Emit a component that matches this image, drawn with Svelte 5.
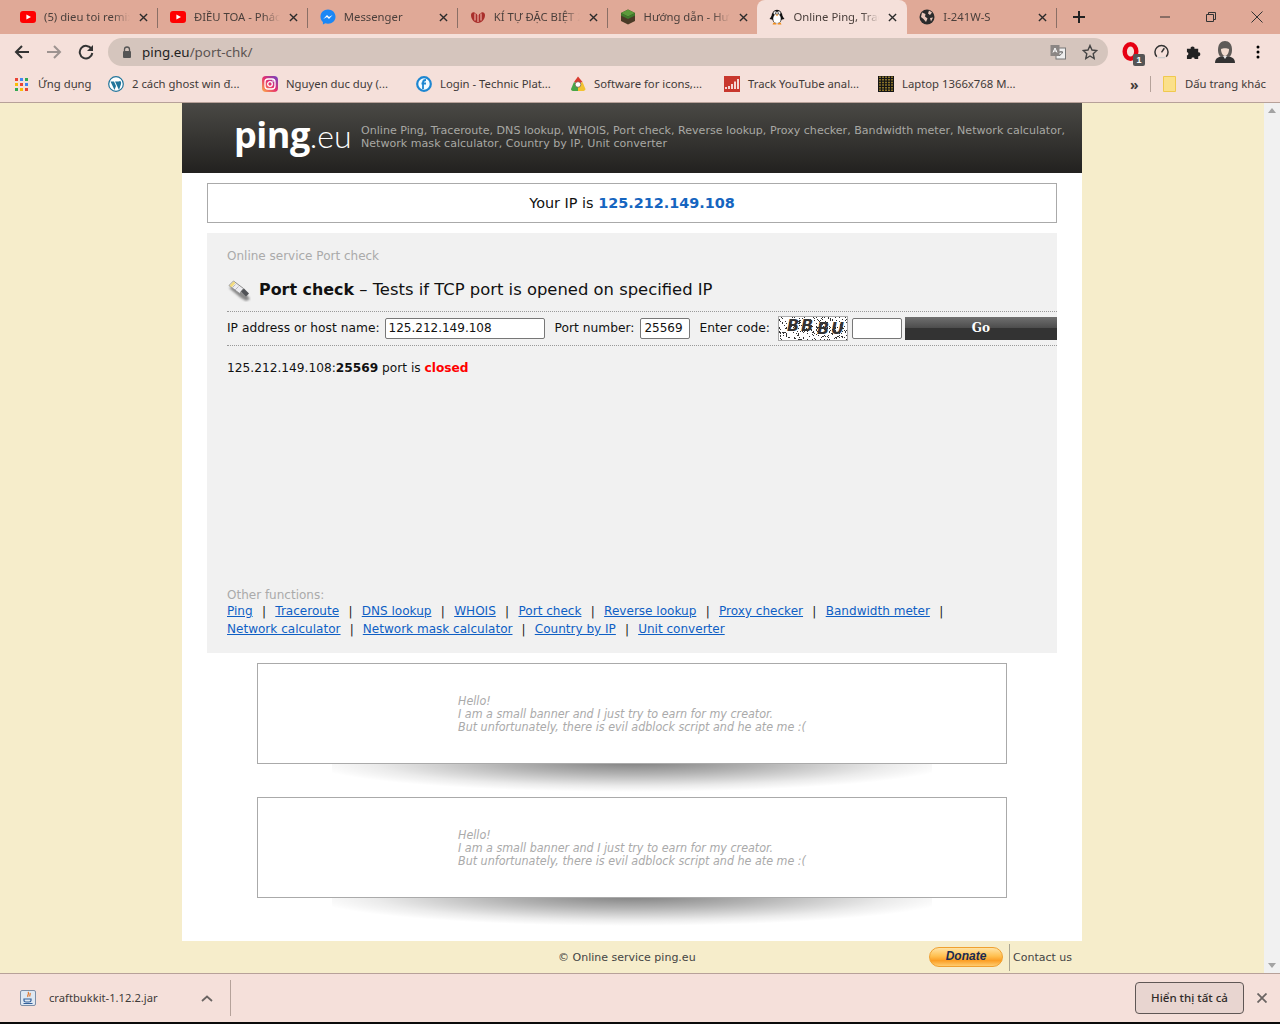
<script>
  const tabs = [
    { title: '(5) dieu toi remix', icon: 'yt' },
    { title: 'ĐIỀU TOA - Phác đồ', icon: 'yt' },
    { title: 'Messenger', icon: 'ms' },
    { title: 'KÍ TỰ ĐẶC BIỆT 2', icon: 'ki' },
    { title: 'Hướng dẫn - Hướng', icon: 'mc' },
    { title: 'Online Ping, Traceroute', icon: 'pg', active: true },
    { title: 'I-241W-S', icon: 'gl' }
  ];
  const marks = [
    { title: 'Ứng dụng', icon: 'apps', w: 93 },
    { title: '2 cách ghost win đ...', icon: 'wp', w: 154 },
    { title: 'Nguyen duc duy (...', icon: 'ig', w: 154 },
    { title: 'Login - Technic Plat...', icon: 'tp', w: 154 },
    { title: 'Software for icons,...', icon: 'sw', w: 154 },
    { title: 'Track YouTube anal...', icon: 'tr', w: 154 },
    { title: 'Laptop 1366x768 M...', icon: 'lp', w: 154 }
  ];
  const links1 = ['Ping', 'Traceroute', 'DNS lookup', 'WHOIS', 'Port check', 'Reverse lookup', 'Proxy checker', 'Bandwidth meter'];
  const links2 = ['Network calculator', 'Network mask calculator', 'Country by IP', 'Unit converter'];
  const appColors = ['#ea4335', '#4285f4', '#34a853', '#fbbc05', '#ea4335', '#4285f4', '#34a853', '#fbbc05', '#ea4335'];
  let seed = 77;
  const rnd = () => ((seed = (seed * 16807) % 2147483647) / 2147483647);
  const dots = Array.from({ length: 260 }, () => ({ x: Math.floor(rnd() * 68), y: Math.floor(rnd() * 23) }));
</script>

{#snippet ico(k)}
  {#if k === 'yt'}
    <svg viewBox="0 0 16 16" class="i16"><rect y="2" width="16" height="12" rx="3" fill="#f00"/><path d="M6.400 5.400v5.200L11 8z" fill="#fff"/></svg>
  {:else if k === 'ms'}
    <svg viewBox="0 0 16 16" class="i16"><path d="M8 .5C3.700.5.500 3.600.500 7.700c0 2.200.9 4 2.400 5.300v2.600l2.400-1.300c.8.2 1.700.4 2.700.4 4.300 0 7.500-3 7.500-7S12.300.5 8 .5z" fill="#1b87f5"/><path d="M3.300 10 7 6.100l2 2 3.600-2L9 10 7 8z" fill="#fff"/></svg>
  {:else if k === 'ki'}
    <svg viewBox="0 0 16 16" class="i16"><path d="M1 6c0-2 2-3.500 3.500-2.500L8 6l3.500-2.500C13 2.500 15 4 15 6c0 4-3 8-7 8S1 10 1 6z" fill="#a92f2b"/><path d="M5 4.500v7M8 5v8M11 4.500v7" stroke="#f0b8ac" stroke-width="1.100"/></svg>
  {:else if k === 'mc'}
    <svg viewBox="0 0 16 16" class="i16"><path d="M8 .5 15 4v8l-7 3.500L1 12V4z" fill="#4b3a26"/><path d="M8 .5 15 4 8 7.500 1 4z" fill="#5c9a3a"/><path d="M1 4l7 3.500V10L1 6.500zM15 4 8 7.500V10l7-3.500z" fill="#3f7a2b"/></svg>
  {:else if k === 'pg'}
    <svg viewBox="0 0 16 16" class="i16"><path d="M3.500 15.500h4l-1-2h-2zM8.500 15.500h4l-1-2h-2z" fill="#f08c1a"/><ellipse cx="8" cy="7.500" rx="5.500" ry="6.800" fill="#111"/><ellipse cx="8" cy="9.700" rx="3.800" ry="4.300" fill="#fff"/><circle cx="6.200" cy="4" r="1.700" fill="#fff"/><circle cx="9.800" cy="4" r="1.700" fill="#fff"/><circle cx="6.500" cy="4.100" r=".7"/><circle cx="9.500" cy="4.100" r=".7"/><path d="M6.500 5.600h3L8 7.200z" fill="#f08c1a"/><path d="M3 6.500.5 10l2.500.5M13 6.500l2.500 3.500-2.500.5" fill="#111"/></svg>
  {:else if k === 'gl'}
    <svg viewBox="0 0 16 16" class="i16"><circle cx="8" cy="8" r="7.500" fill="#2b2b2b"/><path d="M3 3.500 6.500 5 6 7.500 8.500 9.500 7 13 4.500 10 2 8zM10 1.500l3 2-2 2.500-2-1.500zM11 9l3-.5-2 4z" fill="#e8c6ba"/></svg>
  {:else if k === 'apps'}
    <span class="apps">{#each appColors as c}<i style:background={c}></i>{/each}</span>
  {:else if k === 'wp'}
    <svg viewBox="0 0 16 16" class="i16"><circle cx="8" cy="8" r="7.300" fill="#fff" stroke="#21759b" stroke-width="1.200"/><path d="M2.500 5.500 6.500 14 8 10 6 5.500zM7 5.500 11 14 13 8c.4-1.300 0-2.500-.8-3L10.500 5.500z" fill="#21759b"/></svg>
  {:else if k === 'ig'}
    <svg viewBox="0 0 16 16" class="i16"><defs><linearGradient id="igg" x1="0" y1="1" x2="1" y2="0"><stop offset="0" stop-color="#fdb14a"/><stop offset=".5" stop-color="#e5306f"/><stop offset="1" stop-color="#6a45c8"/></linearGradient></defs><rect width="16" height="16" rx="4" fill="url(#igg)"/><rect x="3" y="3" width="10" height="10" rx="3" fill="none" stroke="#fff" stroke-width="1.300"/><circle cx="8" cy="8" r="2.300" fill="none" stroke="#fff" stroke-width="1.300"/><circle cx="11" cy="5" r=".8" fill="#fff"/></svg>
  {:else if k === 'tp'}
    <svg viewBox="0 0 16 16" class="i16"><circle cx="8" cy="8" r="6.800" fill="#f4fbff" stroke="#1c86d1" stroke-width="2.200"/><path d="M7 13V6.500c0-1.500 1-2.500 3-2.500M5.500 7.500H10" fill="none" stroke="#1c86d1" stroke-width="1.800"/></svg>
  {:else if k === 'sw'}
    <svg viewBox="0 0 16 16" class="i16"><path d="M8 .5 12.500 6 8 8 4 6z" fill="#d93a2e"/><path d="M4 6 1 13c0 1.500 1 2 3 2h4V9z" fill="#47a648"/><path d="M12.500 6 15.500 13c0 1.500-1.500 2-3 2H8V9z" fill="#f2c230"/><circle cx="8" cy="8.500" r="2.800" fill="#fff" stroke="#6a5a45" stroke-width=".7"/></svg>
  {:else if k === 'tr'}
    <svg viewBox="0 0 16 16" class="i16"><rect width="16" height="16" fill="#c8372d"/><path d="M2 13v-2M5 13V10M8 13V8M11 13V5.500M14 13V3" stroke="#fff" stroke-width="1.600"/></svg>
  {:else if k === 'lp'}
    <svg viewBox="0 0 16 16" class="i16"><rect width="16" height="16" fill="#151515"/><path d="M2 .5v15M5 .5v15M8 .5v15M11 .5v15M14 .5v15" stroke="#c9a534" stroke-width="1.300" stroke-dasharray="1.500 1.100"/></svg>
  {/if}
{/snippet}

{#snippet banner()}
  <div class="banner">
    <p>Hello!<br>I am a small banner and I just try to earn for my creator.<br>But unfortunately, there is evil adblock script and he ate me :(</p>
  </div>
  <div class="shade"></div>
{/snippet}

<div class="screen">
  <header class="chrome">
    <div class="tabstrip">
      {#each tabs as t, n}
        <div class="tab" class:active={t.active} class:sep={!t.active && !tabs[n + 1]?.active}>
          <span class="tabicon">{@render ico(t.icon)}</span>
          <span class="tabtitle">{t.title}</span>
          <svg class="tabx" viewBox="0 0 10 10"><path d="M1 1l8 8M9 1l-8 8" stroke="#2a2a2a" stroke-width="1.500"/></svg>
        </div>
      {/each}
      <svg class="plus" viewBox="0 0 12 12"><path d="M6 0v12M0 6h12" stroke="#222" stroke-width="2"/></svg>
      <div class="winctl">
        <svg viewBox="0 0 12 12"><path d="M1 6h10" stroke="#333"/></svg>
        <svg viewBox="0 0 12 12"><path d="M1.500 3.500h7v7h-7zM3.500 3.500v-2h7v7h-2" fill="none" stroke="#333"/></svg>
        <svg viewBox="0 0 12 12"><path d="M.5.500l11 11M11.500.500l-11 11" stroke="#333"/></svg>
      </div>
    </div>

    <div class="toolbar">
      <svg class="nav" viewBox="0 0 16 16"><path d="M15 8H2M8 2 2 8l6 6" fill="none" stroke="#333" stroke-width="2"/></svg>
      <svg class="nav" viewBox="0 0 16 16"><path d="M1 8h13M8 2l6 6-6 6" fill="none" stroke="#9d9390" stroke-width="2"/></svg>
      <svg class="nav" viewBox="0 0 16 16"><path d="M13.500 5A6.300 6.300 0 1 0 14.300 9" fill="none" stroke="#333" stroke-width="2"/><path d="M15 1v6H9z" fill="#333"/></svg>
      <div class="omni">
        <svg class="lock" viewBox="0 0 10 12"><path d="M2.500 5V3.500a2.500 2.500 0 0 1 5 0V5" fill="none" stroke="#555" stroke-width="1.300"/><rect x="1" y="5" width="8" height="7" rx="1" fill="#555"/></svg>
        <span class="url"><b>ping.eu</b>/port-chk/</span>
        <svg class="trans" viewBox="0 0 16 16"><rect x="6" y="4" width="9.500" height="11" fill="#eee" stroke="#777"/><rect x=".5" y="1" width="9" height="11" fill="#8b8684"/><path d="M3 8.500 5 4l2 4.500M3.700 7h2.600" fill="none" stroke="#fff"/><path d="M9 8h4M11 7v1M12.500 8c-.5 2-2 3-3.500 3.500" fill="none" stroke="#666"/></svg>
        <svg class="star" viewBox="0 0 16 16"><path d="M8 1.500 10 6l4.800.5-3.600 3.200 1 4.800L8 12l-4.200 2.500 1-4.800L1.200 6.500 6 6z" fill="none" stroke="#444" stroke-width="1.400"/></svg>
      </div>
      <div class="exts">
        <span class="opera"><svg viewBox="0 0 16 18" class="op"><ellipse cx="8" cy="9" rx="5.500" ry="6.800" fill="none" stroke="#e60012" stroke-width="4.200"/></svg><em>1</em></span>
        <svg class="gauge" viewBox="0 0 16 16"><path d="M3 13.500a7 7 0 1 1 10 0" fill="none" stroke="#333" stroke-width="1.600"/><path d="M8 9l3-4.500" stroke="#333" stroke-width="1.600"/><path d="M4 14.500h8" stroke="#ccc" stroke-width="1.500"/></svg>
        <svg class="puzzle" viewBox="0 0 16 16"><path d="M1 5h4c-1-3 5-3 4 0h4v4c3-1 3 5 0 4v3H9c1-2-4-2-3 0H1v-4c2 1 2-4 0-3z" fill="#222"/></svg>
        <svg class="avatar" viewBox="0 0 22 22"><path d="M1 22c0-5 4-7 10-7s10 2 10 7z" fill="#333"/><path d="M4 9c0-6 3-9 7-9s7 3 7 9c0 3-1 6-3 7H7c-2-1-3-4-3-7z" fill="#5f5b58"/><path d="M7 8c2-1 6-1 8 0 0 4-2 7-4 7S7 12 7 8z" fill="#f2dccf"/><path d="M9 15h4l-2 3z" fill="#e5e5e5"/></svg>
        <svg class="dots" viewBox="0 0 4 14"><circle cx="2" cy="2" r="1.500"/><circle cx="2" cy="7" r="1.500"/><circle cx="2" cy="12" r="1.500"/></svg>
      </div>
    </div>

    <div class="bookmarks">
      {#each marks as m}
        <div class="mark" style:width="{m.w}px">{@render ico(m.icon)}<span class="up1">{m.title}</span></div>
      {/each}
      <div class="bm-right">
        <span class="more">»</span>
        <span class="bmsep"></span>
        <svg class="folder" viewBox="0 0 13 16"><path d="M.5.500h12v15H.5z" fill="#fbe08a" stroke="#f0c94e"/></svg>
        <span class="up1">Dấu trang khác</span>
      </div>
    </div>
  </header>

  <div class="viewport">
    <main class="page">
      <div class="wrap">
        <div class="head">
          <div class="logo"><span class="lg-a">ping</span><span class="lg-b">.eu</span></div>
          <div class="tag">Online Ping, Traceroute, DNS lookup, WHOIS, Port check, Reverse lookup, Proxy checker, Bandwidth meter, Network calculator,<br>Network mask calculator, Country by IP, Unit converter</div>
        </div>
        <div class="content">
          <div class="ipbox">Your IP is <b>125.212.149.108</b></div>
          <section class="panel">
            <div class="crumb">Online service Port check</div>
            <h1>
              <svg class="plug" viewBox="0 0 24 22">
                <defs><filter id="bl" x="-30%" y="-30%" width="160%" height="160%"><feGaussianBlur stdDeviation="1.300"/></filter></defs>
                <path d="M2 8 14 18l5 3 4-2-4-5L6 6z" fill="#888" filter="url(#bl)"/>
                <path d="M2 5.500 6.500 1 16.500 8.500 12.500 13.500z" fill="#ececf0" stroke="#8f8f8f"/>
                <path d="M2.500 5.500 6.500 1.500 8.500 3 4.500 7.500z" fill="#f2dc80"/>
                <path d="M5 8l3.500-3.500M8 10l3.500-3.500" stroke="#b9b9c0"/>
                <path d="M14 11.500 17 8.500 22 13.500 19 16.500z" fill="#505256"/>
              </svg>
              <span><b>Port check</b> – Tests if TCP port is opened on specified IP</span>
            </h1>
            <form class="frm" onsubmit={(e) => e.preventDefault()}>
              <label for="ip">IP address or host name:</label>
              <input id="ip" class="w-ip" value="125.212.149.108" />
              <label for="port" class="l2">Port number:</label>
              <input id="port" class="w-port" value="25569" />
              <label for="code" class="l3">Enter code:</label>
              <div class="captcha">
                <svg viewBox="0 0 68 23" aria-hidden="true">
                  {#each dots as d}<rect x={d.x} y={d.y} width="1" height="1" fill="#333"/>{/each}
                </svg>
                <span class="c1">BB</span><span class="c2">BU</span>
              </div>
              <input id="code" class="w-code" />
              <button type="submit">Go</button>
            </form>
            <div class="result">125.212.149.108:<b>25569</b> port is <b class="red">closed</b></div>
            <div class="other-f">Other functions:</div>
            <div class="links row1">
              {#each links1 as l}<a href="#top">{l}</a><span class="bar">|</span>{/each}
            </div>
            <div class="links row2">
              {#each links2 as l, n}<a href="#top">{l}</a>{#if n < links2.length - 1}<span class="bar">|</span>{/if}{/each}
            </div>
          </section>
          <div class="ads">
            {@render banner()}
            {@render banner()}
          </div>
        </div>
        <footer class="foot">
          <span class="copy">© Online service ping.eu</span>
          <span class="donate">Donate</span>
          <span class="fsep"></span>
          <span class="contact">Contact us</span>
        </footer>
      </div>
    </main>
    <aside class="scroll">
      <svg viewBox="0 0 8 5"><path d="M4 0 8 5H0z" fill="#a3a3a3"/></svg>
      <svg viewBox="0 0 8 5"><path d="M4 5 8 0H0z" fill="#a3a3a3"/></svg>
    </aside>
  </div>

  <div class="dl">
    <svg class="jar" viewBox="0 0 16 16"><rect x=".5" y=".5" width="15" height="15" rx="1.500" fill="#dfe8f2" stroke="#7c8ea6"/><path d="M8 2c2 2-1.500 3 0 5M10 3c1 1.500-1 2 0 3.500" fill="none" stroke="#e2762b" stroke-width="1.200"/><path d="M4 9h7v1.500c0 1-1 1.500-2 1.500H6c-1 0-2-.5-2-1.500zM3.500 13.500h9" fill="none" stroke="#33609a" stroke-width="1.200"/></svg>
    <span class="fname up1">craftbukkit-1.12.2.jar</span>
    <svg class="chev" viewBox="0 0 12 7"><path d="M1 6l5-4.500L11 6" fill="none" stroke="#6b6563" stroke-width="1.800"/></svg>
    <span class="dlsep"></span>
    <button class="showall" type="button">Hiển thị tất cả</button>
    <svg class="dlx" viewBox="0 0 10 10"><path d="M.5.500l9 9M9.500.500l-9 9" stroke="#6a6462" stroke-width="1.800"/></svg>
  </div>
  <div class="taskbar"></div>
</div>

<style>
  :global(body) { margin: 0; background: #f6edcb; }
  .screen { width: 1280px; height: 1024px; display: flex; flex-direction: column; overflow: hidden; font-family: "Noto Sans", sans-serif; }
  .chrome { background: #f5e0da; border-bottom: 1px solid #b7a199; height: 103px; box-sizing: border-box; flex: none; }
  .up1 { margin-top: -2px; }

  .tabstrip { height: 34px; background: #e0a997; display: flex; align-items: center; padding-left: 8px; position: relative; }
  .tab { width: 149.900px; height: 34px; box-sizing: border-box; padding: 0 9px 0 12px; display: flex; align-items: center; position: relative; flex: none; }
  .tab.sep::after { content: ""; position: absolute; right: 0; top: 8px; height: 20px; width: 1px; background: #8a6f66; }
  .tab.active { background: #f5e0da; border-radius: 8px 8px 0 0; }
  .tabicon { width: 16px; height: 16px; display: flex; align-items: center; justify-content: center; flex: none; }
  .i16 { width: 16px; height: 16px; flex: none; display: block; }
  .tabtitle { margin: -2px 0 0 8px; width: 86px; overflow: hidden; white-space: nowrap; font-size: 11.300px; color: #4a3f3b; -webkit-mask-image: linear-gradient(90deg, #000 80%, transparent); mask-image: linear-gradient(90deg, #000 80%, transparent); }
  .tabx { width: 9px; height: 9px; margin-left: 9px; flex: none; }
  .plus { width: 12px; height: 12px; margin-left: 16px; flex: none; }
  .winctl { margin-left: auto; display: flex; gap: 34px; padding-right: 17px; }
  .winctl svg { width: 12px; height: 12px; display: block; }

  .toolbar { height: 35px; display: flex; align-items: center; padding-left: 14px; }
  .nav { width: 16px; height: 16px; margin-right: 16px; flex: none; }
  .omni { width: 1000px; margin-left: -2px; height: 28px; background: #d5c5bd; border-radius: 14px; display: flex; align-items: center; padding-left: 14px; box-sizing: border-box; flex: none; }
  .lock { width: 10px; height: 12px; flex: none; }
  .url { margin-left: 10px; font-size: 13.400px; color: #5c5452; }
  .url b { font-weight: 400; color: #222; }
  .trans { width: 16px; height: 16px; margin-left: auto; }
  .star { width: 16px; height: 16px; margin: 0 10px 0 16px; }
  .exts { display: flex; align-items: center; flex: 1; padding-left: 14px; }
  .opera { position: relative; width: 20px; height: 20px; display: block; }
  .op { width: 17px; height: 19px; display: block; }
  .opera em { position: absolute; right: -3px; bottom: -4px; width: 12px; height: 12px; background: #555; color: #fff; border-radius: 2px; font: 700 9px/12px "Liberation Sans", sans-serif; text-align: center; }
  .gauge { width: 15px; height: 15px; margin-left: 12px; }
  .puzzle { width: 15px; height: 15px; margin-left: 17px; }
  .avatar { width: 22px; height: 22px; margin-left: 13px; }
  .dots { width: 4px; height: 14px; margin-left: 20px; }

  .bookmarks { height: 33px; padding-bottom: 3px; box-sizing: border-box; display: flex; align-items: center; padding-left: 15px; font-size: 11.300px; color: #3f3a38; }
  .mark { display: flex; align-items: center; gap: 8px; flex: none; white-space: nowrap; }
  .apps { width: 13px; height: 13px; display: grid; grid-template-columns: repeat(3, 3px); gap: 2px; margin-right: 2px; }
  .apps i { display: block; width: 3px; height: 3px; }
  .bm-right { margin-left: auto; display: flex; align-items: center; padding-right: 14px; }
  .more { font-size: 14px; font-weight: 700; width: 14px; }
  .bmsep { width: 1px; height: 16px; background: #b5a29a; margin: 0 12px 0 6px; }
  .folder { width: 13px; height: 16px; margin-right: 9px; }

  .viewport { height: 870px; display: flex; flex: none; background: #f6edcb; }
  .page { width: 1264px; height: 870px; overflow: hidden; flex: none; }
  .wrap { width: 900px; margin-left: 182px; font-family: "DejaVu Sans", Verdana, sans-serif; color: #111; }
  .scroll { width: 16px; background: #f1f1f1; display: flex; flex-direction: column; justify-content: space-between; align-items: center; padding: 5px 0 5px; box-sizing: border-box; }
  .scroll svg { width: 8px; height: 5px; display: block; }

  .head { height: 70px; background: linear-gradient(#4a4945, #22211f); display: flex; align-items: center; padding: 0 0 2px 52px; box-sizing: border-box; }
  .logo { display: flex; align-items: baseline; color: #fff; width: 127px; flex: none; white-space: nowrap; margin-top: -5px; }
  .lg-a { font: 700 36px/1 "Open Sans", sans-serif; letter-spacing: -.5px; }
  .lg-b { font: 300 32px/1 Lato, sans-serif; }
  .tag { font-size: 11.080px; line-height: 13px; color: #a8a8a4; white-space: nowrap; }

  .content { background: #fff; padding: 10px 25px; height: 768px; box-sizing: border-box; }
  .ipbox { height: 40px; border: 1px solid #aaa; box-sizing: border-box; background: #fff; text-align: center; font-size: 14.400px; line-height: 38px; }
  .ipbox b { color: #1565c0; }
  .panel { background: #f1f1f1; margin-top: 10px; height: 420px; padding: 15px 0 0 20px; box-sizing: border-box; }
  .crumb { font-size: 12px; line-height: 16px; color: #aaa; }
  h1 { margin: 16px 0 0; height: 31px; display: flex; font-size: 16.400px; font-weight: 400; line-height: 20px; color: #111; box-sizing: border-box; }
  h1 b { font-weight: 700; font-size: 15.900px; }
  .plug { width: 24px; height: 22px; margin-right: 8px; flex: none; }
  .frm { border-top: 1px dotted #999; border-bottom: 1px dotted #999; height: 35px; padding-bottom: 1px; box-sizing: border-box; display: flex; align-items: center; font-size: 12.250px; }
  .frm label { white-space: nowrap; flex: none; }
  .frm input { height: 21px; box-sizing: border-box; border: 1px solid #777; border-radius: 2px; background: #fff; padding: 0 3px; font: 12px "DejaVu Sans", sans-serif; color: #111; outline: none; flex: none; }
  .w-ip { width: 160px; margin-left: 5px; }
  .w-port { width: 50px; margin-left: 6px; }
  .w-code { width: 50px; margin-left: 4px; }
  .l2 { margin-left: 10px; }
  .l3 { margin-left: 9px; }
  .captcha { width: 70px; height: 25px; margin-left: 8px; border: 1px solid #aaa; box-sizing: border-box; background: #fff; position: relative; flex: none; overflow: hidden; }
  .captcha svg { display: block; width: 68px; height: 23px; }
  .captcha span { position: absolute; font: italic 700 16px/18px "DejaVu Sans", sans-serif; letter-spacing: 2px; color: #333; white-space: nowrap; }
  .c1 { left: 8px; top: 0; }
  .c2 { left: 38px; top: 3px; }
  .frm button { flex: 0 0 152px; height: 23px; margin-left: 3px; border: 0; background: linear-gradient(#707070, #4b4b4b 50%, #333 50%); color: #fff; font: 700 12px "DejaVu Serif", serif; padding: 0; }
  .result { margin-top: 13px; font-size: 12.200px; line-height: 18px; }
  .red { color: #f00; }
  .other-f { margin-top: 210px; font-size: 12px; line-height: 16px; color: #aaa; }
  .links { line-height: 18px; white-space: nowrap; font-size: 12.050px; }
  .row1 { margin-top: -1px; }
  .links a { color: #0f5fc4; text-decoration: underline; }
  .bar { color: #222; padding: 0 9.100px; }
  .row1 .bar { padding: 0 9.300px; }

  .ads { margin-top: 10px; }
  .banner { width: 750px; height: 101px; margin: 0 auto; border: 1px solid #aaa; box-sizing: border-box; background: #fff; padding: 30px 0 0 200px; }
  .banner p { margin: 0; font: italic 12.400px/13px "DejaVu Sans Condensed", "DejaVu Sans", sans-serif; color: #aaa; white-space: nowrap; }
  .shade { width: 600px; height: 33px; margin: 0 auto; background: radial-gradient(ellipse 54% 30px at 50% -2px, rgba(0,0,0,.5) 0, rgba(0,0,0,.3) 40%, rgba(0,0,0,.08) 80%, transparent 100%); }

  .foot { height: 32px; display: flex; align-items: center; font-size: 11px; color: #444; padding-left: 376px; box-sizing: border-box; }
  .copy { width: 371px; flex: none; white-space: nowrap; }
  .donate { width: 74px; height: 20px; box-sizing: border-box; border: 1px solid #f0a030; border-radius: 10px; background: linear-gradient(#ffe3a5 0, #ffc050 45%, #fb9e25 70%, #ffcc70); color: #1a2a50; font: italic 700 12px/17px "Liberation Sans", sans-serif; text-align: center; flex: none; }
  .fsep { width: 1px; height: 27px; background: #a8a491; margin: 0 3px 0 6px; flex: none; }
  .contact { white-space: nowrap; }

  .dl { height: 49px; flex: none; border-top: 1px solid #b7a199; box-sizing: border-box; background: #f5e0da; display: flex; align-items: center; padding-left: 20px; font-size: 11.200px; color: #3f3a38; }
  .jar { width: 16px; height: 16px; flex: none; }
  .fname { margin-left: 13px; width: 155px; white-space: nowrap; }
  .chev { width: 12px; height: 7px; flex: none; margin-right: 17px; margin-left: -3px; }
  .dlsep { width: 1px; height: 36px; background: #b5a29a; flex: none; }
  .showall { margin-left: auto; width: 109px; height: 32px; border: 1px solid #5f5755; border-radius: 4px; background: #e8d5d0; color: #2f2a28; font: 500 11.500px "Noto Sans", sans-serif; padding: 0 0 2px; }
  .dlx { width: 10px; height: 10px; margin: 0 13px 0 13px; flex: none; }
  .taskbar { height: 2px; background: #0a0a0a; flex: none; }
</style>
